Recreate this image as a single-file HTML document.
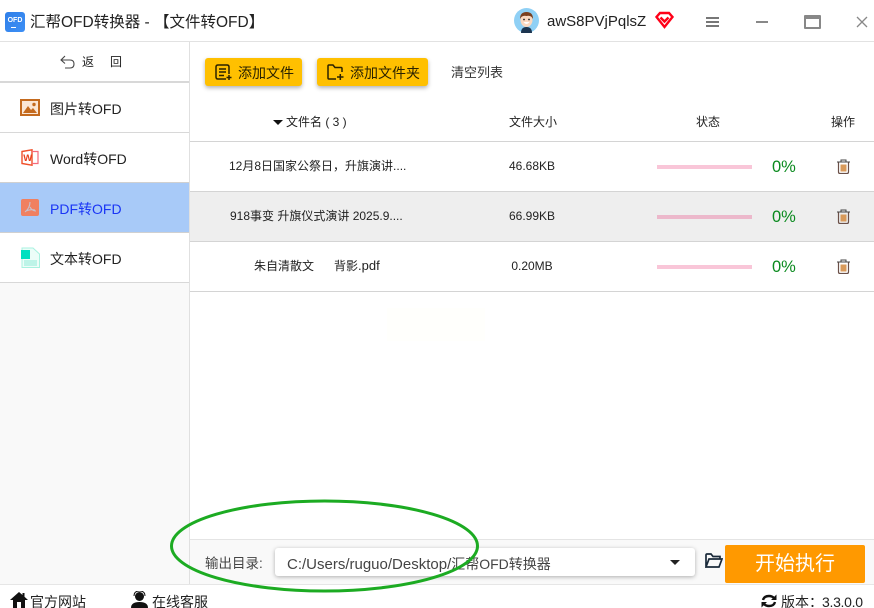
<!DOCTYPE html>
<html lang="zh"><head><meta charset="utf-8"><style>
html,body{margin:0;padding:0;background:#fff}
#p{position:relative;width:874px;height:608px;overflow:hidden;background:#fff;font-family:"Liberation Sans","Noto Sans CJK SC",sans-serif;color:#222}
#p div,#p svg{position:absolute}
.t{white-space:nowrap;line-height:20px;height:20px}
.c{text-align:center}
.bar{left:657px;width:95px;height:4px;background:#f9c6d8}
.pc{left:772px;width:30px;font-size:16.500px;color:#0a8a1e}
.size{font-size:12px;left:482px;width:100px;text-align:center}
.nav{left:50px;font-size:14px}
.y{background:#ffc000;border-radius:3px;box-shadow:0 2px 4px rgba(0,0,0,.3);height:28px;top:58px}
</style></head><body><div id="p">

<!-- title bar -->
<div style="left:5px;top:12px;width:20px;height:20px;border-radius:3px;background:linear-gradient(135deg,#2f7fe8,#3d8ff5)"></div>
<div class="t" style="left:5px;top:16px;width:20px;height:10px;line-height:10px;font-size:7px;font-weight:bold;color:#fff;text-align:center">OFD</div>
<div style="left:11px;top:27px;width:5px;height:1px;background:#fff"></div>
<div class="t" style="left:30px;top:13px;font-size:15.500px;color:#222">汇帮OFD转换器 - 【文件转OFD】</div>

<svg style="left:514px;top:8px" width="25" height="25" viewBox="0 0 25 25">
<circle cx="12.500" cy="12.500" r="12.500" fill="#8fd0f5"/>
<path d="M7 25 Q7 19 12.500 19 Q18 19 18 25Z" fill="#1c3550"/>
<ellipse cx="12.500" cy="12" rx="6" ry="7" fill="#fad8c0"/>
<path d="M6 11 Q6 4 12.500 4 Q19 4 19 11 Q17 7 12.500 8 Q8 7 6 11Z" fill="#7a3f1e"/>
<path d="M9.500 14 Q12.500 18 15.500 14Z" fill="#fff"/>
<circle cx="10" cy="11.500" r=".9" fill="#222"/><circle cx="15" cy="11.500" r=".9" fill="#222"/>
</svg>
<div class="t" style="left:547px;top:12px;font-size:15px;color:#222">awS8PVjPqlsZ</div>
<svg style="left:655px;top:11px" width="19" height="18" viewBox="0 0 19 18" fill="none" stroke="#ff0018" stroke-width="2.400">
<path d="M5 2H14L17.500 6 9.500 16 1.500 6Z"/><path d="M5.500 6.500 9.500 10.500 13.500 6.500"/>
</svg>
<div style="left:706px;top:17px;width:13px;height:2px;background:#777"></div>
<div style="left:706px;top:21px;width:13px;height:2px;background:#777"></div>
<div style="left:706px;top:25px;width:13px;height:2px;background:#777"></div>
<div style="left:756px;top:21px;width:12px;height:2px;background:#888"></div>
<div style="left:804px;top:15px;width:13px;height:8px;border:2px solid #888;border-top-width:4px;border-radius:1px"></div>
<svg style="left:856px;top:16px" width="12" height="12" viewBox="0 0 12 12" stroke="#888" stroke-width="1.300"><path d="M1 1 11 11M11 1 1 11"/></svg>
<div style="left:0;top:41px;width:874px;height:1px;background:#e2e2e2"></div>

<!-- sidebar -->
<div style="left:0;top:283px;width:189px;height:301px;background:#f9f9f9"></div>
<div style="left:189px;top:42px;width:1px;height:542px;background:#e0e0e0"></div>
<svg style="left:59px;top:55px" width="17" height="14" viewBox="0 0 17 14" fill="none" stroke="#444" stroke-width="1.100"><path d="M6 1 2 5 6 8.500M2 5H11Q15 5 15 9Q15 13 11 13H6"/></svg>
<div class="t" style="left:82px;top:52px;font-size:12px">返</div>
<div class="t" style="left:110px;top:52px;font-size:12px">回</div>
<div style="left:0;top:81px;width:189px;height:2px;background:#d8d8d8"></div>

<svg style="left:20px;top:99px" width="20" height="17" viewBox="0 0 20 17">
<rect x="1" y="1" width="18" height="15" fill="#fbe6d4" stroke="#c46a1e" stroke-width="2"/>
<path d="M3 14 8 7 11 11 13 9 17 14Z" fill="#c46a1e"/><circle cx="14" cy="5.500" r="1.700" fill="#c46a1e"/>
</svg>
<div class="t nav" style="top:99px">图片转OFD</div>
<div style="left:0;top:132px;width:189px;height:1px;background:#d8d8d8"></div>

<svg style="left:21px;top:149px" width="18" height="17" viewBox="0 0 18 17">
<path d="M1 2.500 11 .8V16.200L1 14.500Z" fill="#fff" stroke="#f0502a" stroke-width="1.400"/>
<path d="M11 2.500H17V14.500H11" fill="none" stroke="#f56a7a" stroke-width="1.200"/>
<text x="2.300" y="12" font-size="9.500" font-weight="bold" fill="#e8401c" font-family="Liberation Sans">W</text>
</svg>
<div class="t nav" style="top:149px">Word转OFD</div>

<div style="left:0;top:183px;width:189px;height:50px;background:#a8caf8"></div>
<div style="left:0;top:182px;width:189px;height:1px;background:#d0d0d0"></div>
<svg style="left:21px;top:199px" width="18" height="17" viewBox="0 0 18 17">
<rect width="18" height="17" rx="2" fill="#f08060"/>
<path d="M9 3 Q9 9 4 13 M9 8 Q11 12 15 12 M5 12 Q9 10 14 11" fill="none" stroke="#c9c0cc" stroke-width="1.100"/>
</svg>
<div class="t nav" style="top:199px;color:#1a35f5">PDF转OFD</div>
<div style="left:0;top:232px;width:189px;height:1px;background:#d0d0d0"></div>

<svg style="left:21px;top:247px" width="19" height="21" viewBox="0 0 19 21">
<path d="M1 1H12L18.500 7V20.500H1Z" fill="#ecfdf8" stroke="#a8f2e0" stroke-width="1"/>
<rect x="0" y="3" width="9" height="9" fill="#00e0c0"/>
<path d="M3 14H16M3 16H16M3 18H16" stroke="#8eecd8" stroke-width="1"/>
</svg>
<div class="t nav" style="top:249px">文本转OFD</div>
<div style="left:0;top:282px;width:189px;height:1px;background:#d8d8d8"></div>

<!-- toolbar -->
<div class="y" style="left:205px;width:97px"></div>
<svg style="left:215px;top:64px" width="17" height="16" viewBox="0 0 17 16" fill="none" stroke="#2a2200" stroke-width="1.500">
<path d="M11 15H3Q1 15 1 13V3Q1 1 3 1H12Q14 1 14 3V10"/><path d="M4 5H11M4 8H11M4 11.500H9"/><path d="M11.500 13.500H16.500M14 11V16"/>
</svg>
<div class="t" style="left:238px;top:63px;font-size:14px;color:#2a2200">添加文件</div>
<div class="y" style="left:317px;width:111px"></div>
<svg style="left:327px;top:64px" width="17" height="16" viewBox="0 0 17 16" fill="none" stroke="#2a2200" stroke-width="1.500">
<path d="M9 15H2Q1 15 1 14V2Q1 1 2 1H6L8 3.500H14Q15 3.500 15 4.500V8"/><path d="M10 13H16.500M13.300 10V16"/>
</svg>
<div class="t" style="left:350px;top:63px;font-size:14px;color:#2a2200">添加文件夹</div>
<div class="t" style="left:451px;top:63px;font-size:13px;color:#333">清空列表</div>

<!-- table header -->
<div style="left:273px;top:120px;width:0;height:0;border-left:5px solid transparent;border-right:5px solid transparent;border-top:5px solid #111"></div>
<div class="t" style="left:286px;top:112px;font-size:12px;white-space:pre">文件名 ( 3 )</div>
<div class="t" style="left:509px;top:112px;font-size:12px">文件大小</div>
<div class="t" style="left:696px;top:112px;font-size:12px">状态</div>
<div class="t" style="left:831px;top:112px;font-size:12px">操作</div>
<div style="left:190px;top:141px;width:684px;height:1px;background:#d4d4d4"></div>

<!-- rows -->
<div style="left:190px;top:192px;width:684px;height:49px;background:#eeeeee"></div>
<div style="left:190px;top:191px;width:684px;height:1px;background:#d4d4d4"></div>
<div style="left:190px;top:241px;width:684px;height:1px;background:#d4d4d4"></div>
<div style="left:190px;top:291px;width:684px;height:1px;background:#d4d4d4"></div>

<div class="t" style="left:229px;top:156px;font-size:12px">12月8日国家公祭日，升旗演讲....</div>
<div class="size t" style="top:156px">46.68KB</div>
<div class="bar" style="top:165px"></div>
<div class="pc t" style="top:157px">0%</div>

<div class="t" style="left:230px;top:206px;font-size:12px">918事变 升旗仪式演讲 2025.9....</div>
<div class="size t" style="top:206px">66.99KB</div>
<div class="bar" style="top:215px;background:#ecb8cb"></div>
<div class="pc t" style="top:207px">0%</div>

<div class="t" style="left:254px;top:256px;font-size:12px;white-space:pre">朱自清散文      背影<span style="font-size:13px">.pdf</span></div>
<div class="size t" style="top:256px">0.20MB</div>
<div class="bar" style="top:265px"></div>
<div class="pc t" style="top:257px">0%</div>

<svg style="left:836px;top:159px" width="15" height="15" viewBox="0 0 15 15"><path d="M1 3H14M5 3V1H10V3" fill="none" stroke="#444" stroke-width="1"/><path d="M2.500 3.500V13Q2.500 14.500 4 14.500H11Q12.500 14.500 12.500 13V3.500" fill="none" stroke="#6b5048" stroke-width="1.200"/><rect x="4.500" y="5.500" width="6" height="7" fill="#d89a5a"/></svg>
<svg style="left:836px;top:209px" width="15" height="15" viewBox="0 0 15 15"><path d="M1 3H14M5 3V1H10V3" fill="none" stroke="#444" stroke-width="1"/><path d="M2.500 3.500V13Q2.500 14.500 4 14.500H11Q12.500 14.500 12.500 13V3.500" fill="none" stroke="#6b5048" stroke-width="1.200"/><rect x="4.500" y="5.500" width="6" height="7" fill="#d89a5a"/></svg>
<svg style="left:836px;top:259px" width="15" height="15" viewBox="0 0 15 15"><path d="M1 3H14M5 3V1H10V3" fill="none" stroke="#444" stroke-width="1"/><path d="M2.500 3.500V13Q2.500 14.500 4 14.500H11Q12.500 14.500 12.500 13V3.500" fill="none" stroke="#6b5048" stroke-width="1.200"/><rect x="4.500" y="5.500" width="6" height="7" fill="#d89a5a"/></svg>

<div style="left:387px;top:308px;width:98px;height:33px;background:#fffffc"></div>

<!-- bottom bar -->
<div style="left:190px;top:540px;width:684px;height:44px;background:#f9f9f9"></div>
<div style="left:190px;top:539px;width:684px;height:1px;background:#e4e4e4"></div>
<div class="t" style="left:205px;top:554px;font-size:13.500px;color:#444">输出目录:</div>
<div style="left:275px;top:548px;width:420px;height:28px;background:#fff;border-radius:3px;box-shadow:0 1px 4px rgba(0,0,0,.3)"></div>
<div class="t" style="left:287px;top:554px;font-size:14px;color:#444"><span style="font-size:15px">C:/Users/ruguo/Desktop/</span>汇帮OFD转换器</div>
<div style="left:670px;top:560px;width:0;height:0;border-left:5px solid transparent;border-right:5px solid transparent;border-top:5px solid #222"></div>
<svg style="left:705px;top:553px" width="18" height="16" viewBox="0 0 18 16" fill="none" stroke="#1a2a3a" stroke-width="1.700"><path d="M1 14V2Q1 1 2 1H6L8 3.500H15V6M1 14H14L17 6H4L1 14Z"/></svg>
<div style="left:725px;top:545px;width:140px;height:38px;background:#ff9900;border-radius:2px"></div>
<div class="t c" style="left:725px;top:554px;width:140px;font-size:20px;color:#fff">开始执行</div>
<div style="left:0;top:584px;width:874px;height:1px;background:#e6e6e6"></div>

<!-- footer -->
<svg style="left:10px;top:591px" width="18" height="17" viewBox="0 0 18 17"><path d="M9 1 0 9H3V17H7V11H11V17H15V9H18L14.500 5.800V2H12.500V4Z" fill="#111"/></svg>
<div class="t" style="left:30px;top:592px;font-size:14px;color:#222">官方网站</div>
<svg style="left:131px;top:591px" width="17" height="17" viewBox="0 0 17 17"><circle cx="8.500" cy="5.500" r="4.500" fill="#111"/><path d="M3 5Q3 0 8.500 0Q14 0 14 5" fill="none" stroke="#111" stroke-width="1"/><path d="M0 17Q0 11 8.500 11Q17 11 17 17Z" fill="#111"/></svg>
<div class="t" style="left:152px;top:592px;font-size:14px;color:#222">在线客服</div>
<svg style="left:761px;top:594px" width="16" height="14" viewBox="0 0 16 14" fill="none" stroke="#111" stroke-width="2.400"><path d="M2 6Q3 2 8 2Q11 2 13 4"/><path d="M14 8Q13 12 8 12Q5 12 3 10"/><path d="M15.500 .5V6H10Z" fill="#111" stroke="none"/><path d="M.5 13.500V8H6Z" fill="#111" stroke="none"/></svg>
<div class="t" style="left:781px;top:592px;font-size:14px;color:#222">版本：<span style="margin-left:-1px;letter-spacing:-.3px">3.3.0.0</span></div>

<!-- green ellipse annotation -->
<svg style="left:168px;top:498px" width="314" height="98" viewBox="0 0 314 98"><ellipse cx="156.500" cy="48" rx="153" ry="45" fill="none" stroke="#1cab22" stroke-width="3"/></svg>
</div></body></html>
